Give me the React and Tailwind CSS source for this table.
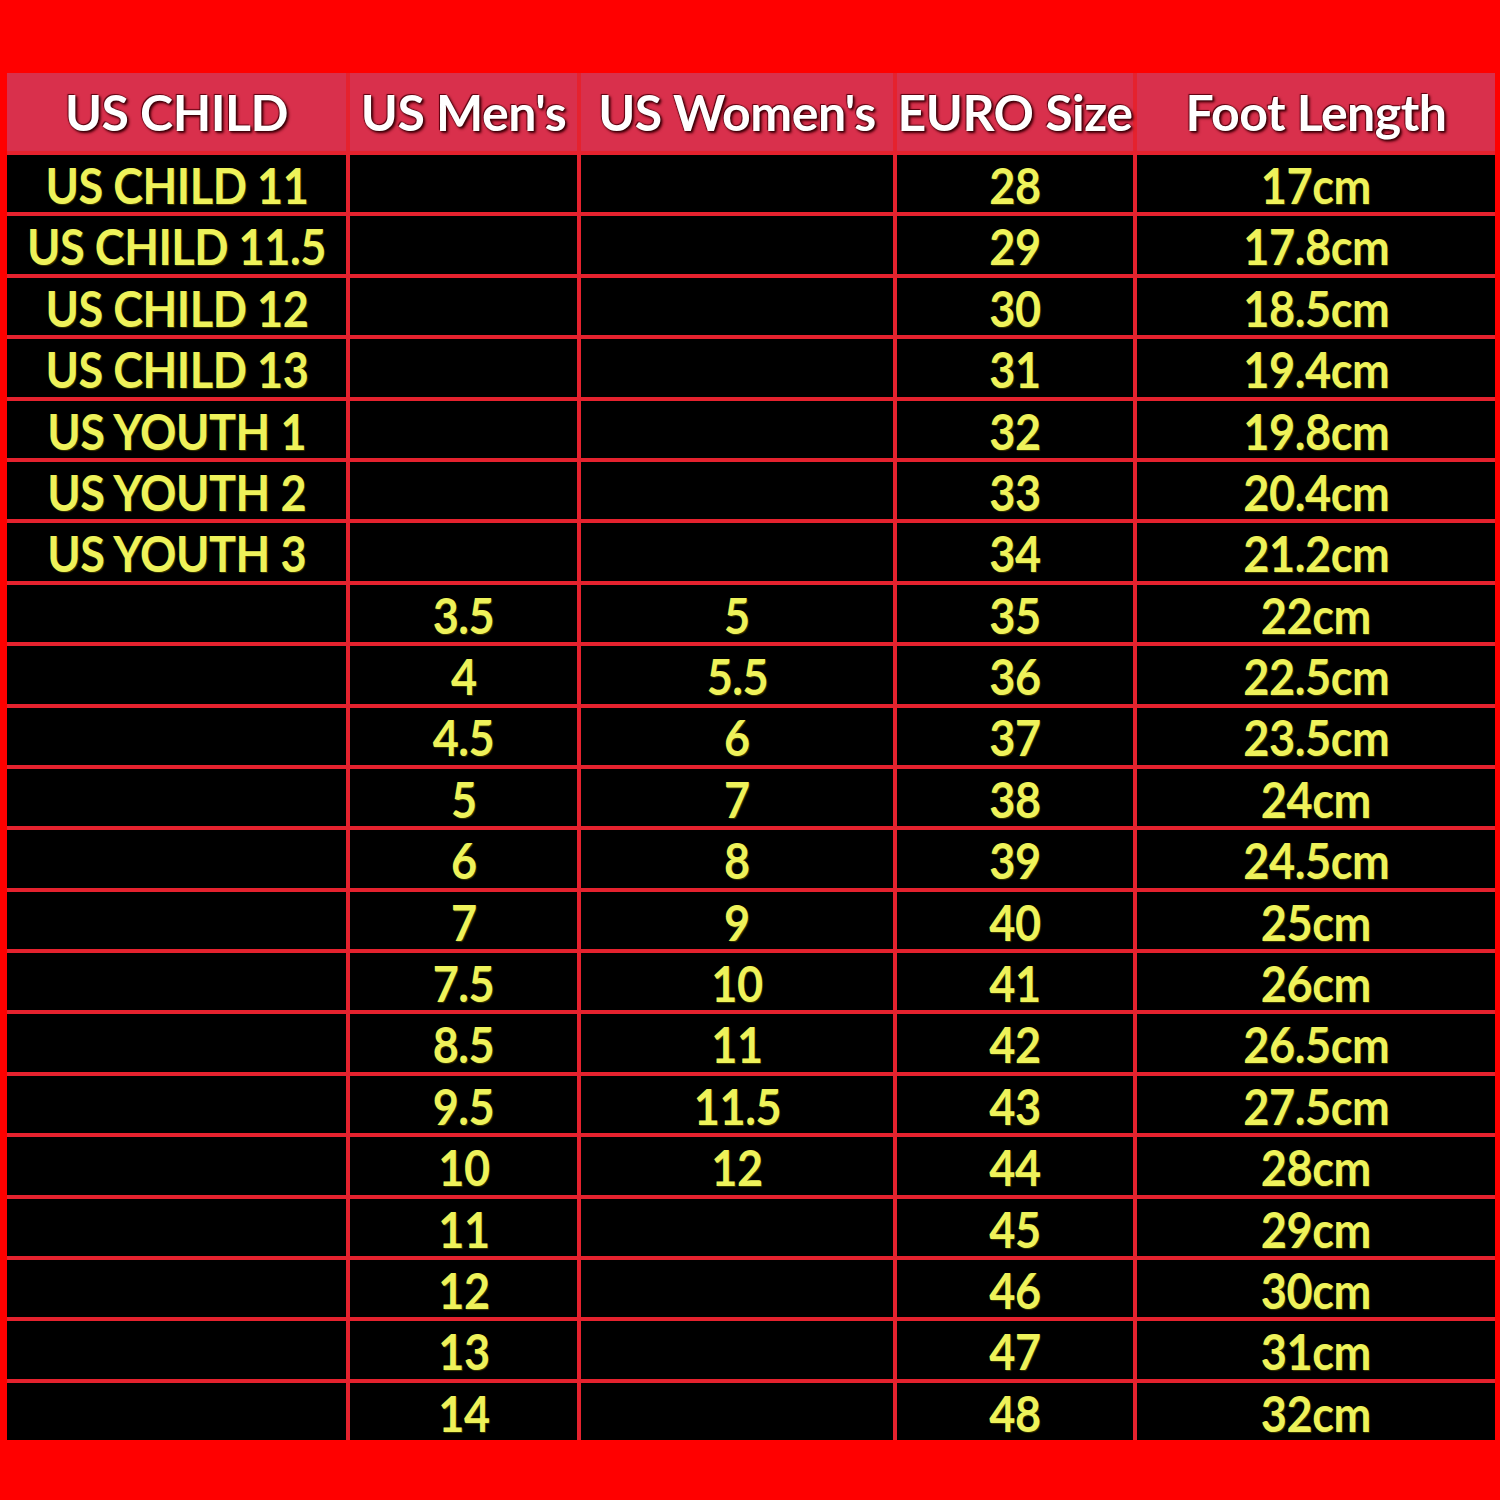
import React from "react";

const headers = ["US CHILD", "US Men's", "US Women's", "EURO Size", "Foot Length"];

const rows = [
  ["US CHILD 11", "", "", "28", "17cm"],
  ["US CHILD 11.5", "", "", "29", "17.8cm"],
  ["US CHILD 12", "", "", "30", "18.5cm"],
  ["US CHILD 13", "", "", "31", "19.4cm"],
  ["US YOUTH 1", "", "", "32", "19.8cm"],
  ["US YOUTH 2", "", "", "33", "20.4cm"],
  ["US YOUTH 3", "", "", "34", "21.2cm"],
  ["", "3.5", "5", "35", "22cm"],
  ["", "4", "5.5", "36", "22.5cm"],
  ["", "4.5", "6", "37", "23.5cm"],
  ["", "5", "7", "38", "24cm"],
  ["", "6", "8", "39", "24.5cm"],
  ["", "7", "9", "40", "25cm"],
  ["", "7.5", "10", "41", "26cm"],
  ["", "8.5", "11", "42", "26.5cm"],
  ["", "9.5", "11.5", "43", "27.5cm"],
  ["", "10", "12", "44", "28cm"],
  ["", "11", "", "45", "29cm"],
  ["", "12", "", "46", "30cm"],
  ["", "13", "", "47", "31cm"],
  ["", "14", "", "48", "32cm"],
];

export default function App() {
  return (
    <div className="w-[1500px] h-[1500px] bg-[#ff0000] pt-[73px] pl-[7px] font-['Lato',sans-serif]">
      <div className="grid w-[1488px] grid-cols-[339px_227px_312px_236px_358px] gap-[4px] bg-[#e5222e]">
        {headers.map((h) => (
          <div
            key={h}
            className="h-[78px] bg-[#d9304c] flex items-center justify-center text-white font-bold text-[50px] tracking-[-0.5px] whitespace-nowrap [text-shadow:1px_1px_2px_#3a0008,-1px_-1px_1px_#5a0010,2px_2px_3px_#50000c]"
          >
            {h}
          </div>
        ))}
        {rows.map((row, i) =>
          row.map((cell, j) => (
            <div
              key={i + "-" + j}
              className="h-[57.4px] bg-black flex items-center justify-center text-[#eef25a] font-bold text-[49px] whitespace-nowrap pt-[4px]"
            >
              <span className="inline-block scale-x-[0.92] tracking-[-0.5px] [text-shadow:1px_1px_1px_#3a3a00]">{cell}</span>
            </div>
          ))
        )}
      </div>
    </div>
  );
}
